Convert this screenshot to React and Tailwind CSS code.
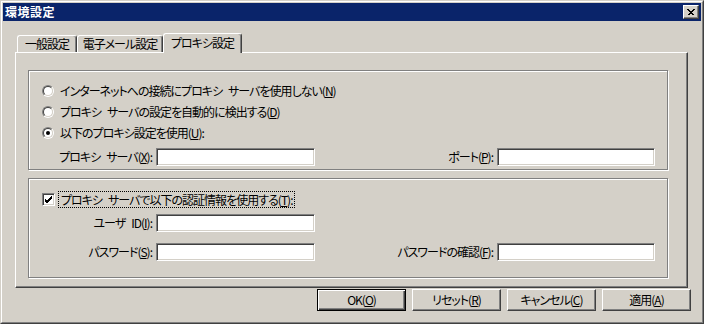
import React from "react";

const font = { fontFamily: '"Noto Sans CJK JP", "Noto Sans", sans-serif' };

const Key = ({ k }) => (
  <>
    (<span className="underline underline-offset-1">{k}</span>)
  </>
);

// wider gap than the squeezed space of the tracking
const Sp = () => <span className="inline-block w-[6px]" />;

const Radio = ({ checked }) => (
  <div className="w-[12px] h-[12px] rounded-full border border-t-[#808080] border-l-[#808080] border-r-white border-b-white">
    <div className="w-full h-full rounded-full bg-white border border-t-[#404040] border-l-[#404040] border-r-[#d4d0c8] border-b-[#d4d0c8] flex items-center justify-center">
      {checked && <div className="w-[4px] h-[4px] rounded-full bg-black" />}
    </div>
  </div>
);

const Check = () => (
  <div className="w-[13px] h-[13px] bg-white border border-t-[#808080] border-l-[#808080] border-r-white border-b-white shadow-[inset_1px_1px_0_#404040,inset_-1px_-1px_0_#d4d0c8] flex items-center justify-center">
    <svg width="9" height="9" viewBox="0 0 9 9">
      <path d="M1 4 L3 6 L8 1 M1 5 L3 7 L8 2 M1 6 L3 8 L8 3" stroke="#000" strokeWidth="1" fill="none" shapeRendering="crispEdges" />
    </svg>
  </div>
);

const Field = ({ w }) => (
  <div
    className="h-[18px] bg-white border border-t-[#808080] border-l-[#808080] border-r-white border-b-white shadow-[inset_1px_1px_0_#404040,inset_-1px_-1px_0_#d4d0c8]"
    style={{ width: w }}
  />
);

const RadioRow = ({ checked, children }) => (
  <div className="h-[21px] flex items-center">
    <Radio checked={checked} />
    <span className="ml-[6px]">{children}</span>
  </div>
);

const Tab = ({ label, active, w }) => (
  <div
    className={
      "flex items-center justify-center border-t border-l border-t-white border-l-white border-r border-r-[#404040] rounded-t-[3px] shadow-[inset_-1px_0_0_#808080] bg-[#d4d0c8] " +
      (active ? "h-[20px] -mb-[1px] relative z-10 pb-[2px]" : "h-[17px]")
    }
    style={{ width: w }}
  >
    {label}
  </div>
);

const Group = ({ children, className }) => (
  <div
    className={
      "w-[640px] h-[100px] border border-[#808080] shadow-[inset_1px_1px_0_white,1px_1px_0_white] " +
      (className || "")
    }
  >
    {children}
  </div>
);

const Button = ({ children, def }) => (
  <div
    className={
      "w-[89px] h-[22px] flex items-center justify-center " +
      (def
        ? "border border-black shadow-[inset_1px_1px_0_white,inset_-1px_-1px_0_#404040,inset_-2px_-2px_0_#808080]"
        : "border border-t-white border-l-white border-r-[#404040] border-b-[#404040] shadow-[inset_-1px_-1px_0_#808080]")
    }
  >
    {children}
  </div>
);

export default function App() {
  return (
    <div
      style={font}
      className="w-[704px] h-[324px] bg-[#d4d0c8] text-[12px] leading-[14px] tracking-[-1px] text-black [font-feature-settings:'palt'] border border-t-[#d4d0c8] border-l-[#d4d0c8] border-r-[#404040] border-b-[#404040]"
    >
      <div className="w-full h-full border border-t-white border-l-white border-r-[#808080] border-b-[#808080] p-[1px] flex flex-col">
        {/* title bar */}
        <div className="h-[18px] bg-[#0a246a] flex items-center justify-between pl-[2px] pr-[2px]">
          <span className="text-white font-bold text-[12px] tracking-[0.5px]">環境設定</span>
          <div className="w-[16px] h-[14px] bg-[#d4d0c8] border border-t-white border-l-white border-r-[#404040] border-b-[#404040] shadow-[inset_-1px_-1px_0_#808080] flex items-center justify-center">
            <svg width="8" height="7" viewBox="0 0 8 7">
              <path d="M0.5 0.5 L6.5 6.5 M1.5 0.5 L7.5 6.5 M6.5 0.5 L0.5 6.5 M7.5 0.5 L1.5 6.5" stroke="#000" strokeWidth="1" shapeRendering="crispEdges" />
            </svg>
          </div>
        </div>

        <div className="pl-[12px] pt-[12px] flex flex-col">
          {/* tabs */}
          <div className="h-[19px] flex items-end pl-[2px]">
            <Tab label="一般設定" w={60} />
            <Tab label="電子メール設定" w={86} />
            <Tab label="プロキシ設定" w={79} active />
          </div>

          {/* panel */}
          <div className="w-[673px] h-[236px] border border-t-white border-l-white border-r-[#404040] border-b-[#404040] shadow-[inset_-1px_-1px_0_#808080] pl-[12px] pt-[17px] flex flex-col gap-[8px]">
            <Group className="pl-[13px] pt-[9px]">
              <RadioRow>
                インターネットへの接続にプロキシ<Sp />サーバを使用しない<Key k="N" />
              </RadioRow>
              <RadioRow>
                プロキシ<Sp />サーバの設定を自動的に検出する<Key k="D" />
              </RadioRow>
              <RadioRow checked>
                以下のプロキシ設定を使用<Key k="U" />:
              </RadioRow>
              <div className="mt-[5px] flex items-center">
                <span className="w-[110px] text-right">
                  プロキシ<Sp />サーバ<Key k="X" />:
                </span>
                <div className="ml-[4px]">
                  <Field w={159} />
                </div>
                <span className="w-[178px] text-right">
                  ポート<Key k="P" />:
                </span>
                <div className="ml-[4px]">
                  <Field w={158} />
                </div>
              </div>
            </Group>

            <Group className="pl-[13px] pt-[11px]">
              <div className="h-[18px] flex items-center">
                <Check />
                <span className="ml-[3px] border border-dotted border-black px-[2px] leading-[15px]">
                  プロキシ<Sp />サーバで以下の認証情報を使用する<Key k="T" />:
                </span>
              </div>
              <div className="mt-[6px] flex items-center">
                <span className="w-[110px] text-right">
                  ユーザ<Sp />ID<Key k="I" />:
                </span>
                <div className="ml-[4px]">
                  <Field w={159} />
                </div>
              </div>
              <div className="mt-[11px] flex items-center">
                <span className="w-[110px] text-right">
                  パスワード<Key k="S" />:
                </span>
                <div className="ml-[4px]">
                  <Field w={159} />
                </div>
                <span className="w-[178px] text-right">
                  パスワードの確認<Key k="F" />:
                </span>
                <div className="ml-[4px]">
                  <Field w={158} />
                </div>
              </div>
            </Group>
          </div>

          {/* buttons */}
          <div className="mt-[1px] ml-[302px] flex gap-[6px]">
            <Button def>
              OK<Key k="O" />
            </Button>
            <Button>
              リセット<Key k="R" />
            </Button>
            <Button>
              キャンセル<Key k="C" />
            </Button>
            <Button>
              適用<Key k="A" />
            </Button>
          </div>
        </div>
      </div>
    </div>
  );
}
